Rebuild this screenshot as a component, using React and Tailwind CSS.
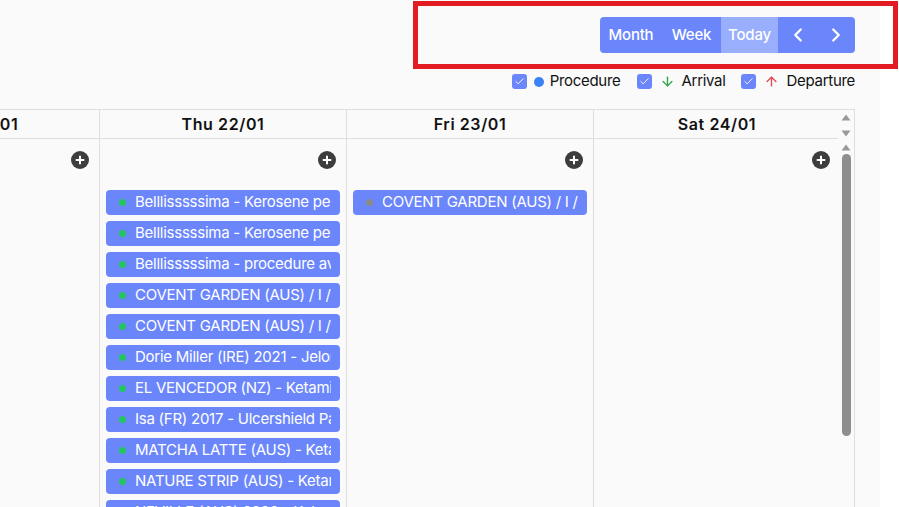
import React from "react";
import { ChevronLeft, ChevronRight, ArrowDown, ArrowUp, Check } from "lucide-react";

const FONT = { fontFamily: "Inter, 'Noto Sans', sans-serif" };

const thuEvents = [
  "Belllisssssima - Kerosene perfusion",
  "Belllisssssima - Kerosene perfusion",
  "Belllisssssima - procedure avancée",
  "COVENT GARDEN (AUS) / I / Ketamine",
  "COVENT GARDEN (AUS) / I / Ketamine",
  "Dorie Miller (IRE) 2021 - Jelonet",
  "EL VENCEDOR (NZ) - Ketamine",
  "Isa (FR) 2017 - Ulcershield Paste",
  "MATCHA LATTE (AUS) - Ketamine",
  "NATURE STRIP (AUS) - Ketamine",
  "NEVILLE (AUS) 2020 - Ketamine",
];

const friEvents = [{ t: "COVENT GARDEN (AUS) / I / Ketamine", gray: true }];

function PlusBtn() {
  return (
    <div className="w-[18px] h-[18px] rounded-full bg-[#3d3d3d] flex items-center justify-center">
      <svg width="10" height="10" viewBox="0 0 10 10">
        <path d="M5 1.5v7M1.5 5h7" stroke="white" strokeWidth="2" strokeLinecap="round" />
      </svg>
    </div>
  );
}

function Event({ t, gray }) {
  return (
    <div className="shrink-0 mx-[6px] h-[25px] rounded-[4px] bg-[#6b86fb] flex items-center pl-[13px] pr-[9px] overflow-hidden whitespace-nowrap">
      <span className={`shrink-0 w-[7px] h-[7px] rounded-full ${gray ? "bg-[#8a8a8a]" : "bg-[#22c55e]"}`} />
      <span className="ml-[9px] text-[15px] tracking-[-0.25px] text-white overflow-hidden">{t}</span>
    </div>
  );
}

function Column({ label, events = [] }) {
  return (
    <div className="w-[247px] shrink-0 border-r border-[#dedede] flex flex-col">
      <div className="shrink-0 h-[29px] border-b border-[#dedede] flex items-center justify-center text-[16px] tracking-[0.6px] font-semibold text-[#111] whitespace-nowrap">
        {label}
      </div>
      <div className="flex flex-col pt-[12px]">
        <div className="flex justify-end pr-[10px]">
          <PlusBtn />
        </div>
        <div className="flex flex-col gap-[6px] mt-[21px]">
          {events.map((e, i) => (
            <Event key={i} t={e.t ?? e} gray={e.gray} />
          ))}
        </div>
      </div>
    </div>
  );
}

function Tri({ up }) {
  return (
    <svg width="10" height="7" viewBox="0 0 10 7">
      <path d={up ? "M5 0.5L9.5 6.5H0.5Z" : "M0.5 0.5H9.5L5 6.5Z"} fill="#999999" />
    </svg>
  );
}

function Checkbox() {
  return (
    <div className="w-[15px] h-[15px] rounded-[3px] bg-[#6b86fb] flex items-center justify-center">
      <Check size={11} color="white" strokeWidth={2} />
    </div>
  );
}

export default function App() {
  return (
    <div className="relative w-[899px] h-[507px] bg-white overflow-hidden" style={FONT}>
      <div className="w-[880px] h-full bg-[#fafafa] flex flex-col">
        <div className="flex justify-end pr-[25px] pt-[17px]">
          <div className="flex h-[36px] rounded-[4px] overflow-hidden bg-[#6b86fb] text-white text-[15px] font-medium tracking-[-0.2px]">
            <div className="w-[62px] flex items-center justify-center">Month</div>
            <div className="w-[59px] flex items-center justify-center">Week</div>
            <div className="w-[57px] flex items-center justify-center bg-[#99aefc]">Today</div>
            <div className="w-[39px] flex items-center justify-center">
              <ChevronLeft size={22} strokeWidth={2.5} />
            </div>
            <div className="w-[38px] flex items-center justify-center">
              <ChevronRight size={22} strokeWidth={2.5} />
            </div>
          </div>
        </div>
        <div className="flex justify-end pr-[25px] mt-[20px] h-[17px] items-center text-[15px] tracking-[-0.3px] text-[#111]">
          <div className="flex items-center">
            <Checkbox />
            <span className="ml-[7px] w-[10px] h-[10px] rounded-full bg-[#3b82f6]" />
            <span className="ml-[6px]">Procedure</span>
          </div>
          <div className="flex items-center ml-[16px]">
            <Checkbox />
            <ArrowDown className="ml-[8px]" size={15} color="#2fa34f" strokeWidth={2.2} />
            <span className="ml-[7px]">Arrival</span>
          </div>
          <div className="flex items-center ml-[15px]">
            <Checkbox />
            <ArrowUp className="ml-[8px]" size={15} color="#e5484d" strokeWidth={2.2} />
            <span className="ml-[8px]">Departure</span>
          </div>
        </div>
        <div className="mt-[19px] w-[855px] flex-1 border-t border-r border-[#dedede] flex min-h-0">
          <div className="w-[838px] overflow-hidden flex">
            <div className="flex -ml-[147px]">
              <Column label="Wed 21/01" />
              <Column label="Thu 22/01" events={thuEvents} />
              <Column label="Fri 23/01" events={friEvents} />
              <Column label="Sat 24/01" />
            </div>
          </div>
          <div className="w-[16px] flex flex-col items-center">
            <div className="h-[30px] flex flex-col items-center justify-between pt-[4px] pb-[3px]">
              <Tri up />
              <Tri />
            </div>
            <div className="mt-[4px]">
              <Tri up />
            </div>
            <div className="mt-[3px] w-[9px] h-[282px] rounded-full bg-[#8e8e8e]" />
          </div>
        </div>
      </div>
      <div className="absolute left-[413px] top-[1px] w-[485px] h-[68px] border-[5px] border-[#e31b23]" />
    </div>
  );
}
